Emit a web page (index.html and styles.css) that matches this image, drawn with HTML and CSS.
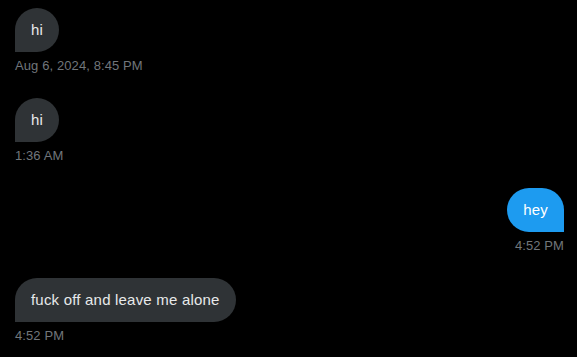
FILE: index.html
```html
<!DOCTYPE html>
<html>
<head>
  <title>Messages</title>
  <link rel="stylesheet" href="styles.css">
</head>
<body>
  <div class="conversation">
    <div class="message received">
      <div class="bubble">hi</div>
      <div class="time">Aug 6, 2024, 8:45 PM</div>
    </div>

    <div class="message received">
      <div class="bubble">hi</div>
      <div class="time">1:36 AM</div>
    </div>

    <div class="message sent">
      <div class="bubble">hey</div>
      <div class="time">4:52 PM</div>
    </div>

    <div class="message received">
      <div class="bubble">fuck off and leave me alone</div>
      <div class="time">4:52 PM</div>
    </div>
  </div>
</body>
</html>
```

FILE: styles.css
```css
/* Page */
body {
  margin: 0;
  padding: 0;
  background-color: #000000;
  font-family: "Liberation Sans", Arial, sans-serif;
}

/* Conversation list */
.conversation {
  display: flex;
  flex-direction: column;
  gap: 24px;
  padding: 8px 13px 0 15px;
}

.message {
  display: flex;
  flex-direction: column;
  align-items: flex-start;
}

.message.sent {
  align-items: flex-end;
}

/* Bubbles */
.bubble {
  padding: 12px 16px;
  font-size: 15px;
  line-height: 20px;
  letter-spacing: 0.2px;
  border-radius: 24px;
  color: #e7e9ea;
  background-color: #2f3336;
}

.received .bubble {
  border-bottom-left-radius: 0;
}

.sent .bubble {
  color: #ffffff;
  background-color: #1d9bf0;
  border-bottom-right-radius: 0;
}

/* Timestamps */
.time {
  margin-top: 6px;
  font-size: 13px;
  line-height: 16px;
  letter-spacing: 0.1px;
  color: #71767b;
}
```
